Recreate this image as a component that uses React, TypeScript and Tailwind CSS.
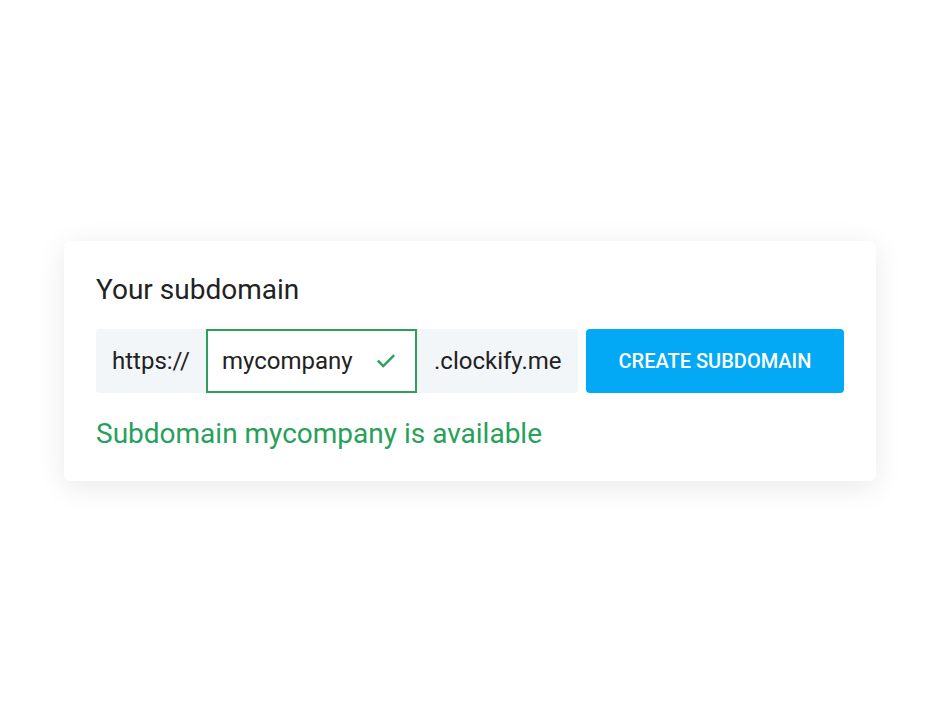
export default function App() {
  return (
    <div className="min-h-screen bg-white px-[64px] pt-[241px] font-['Roboto',sans-serif]">
      <div className="h-[240px] rounded-[6px] bg-white px-[32px] pt-[32px] shadow-[0_6px_30px_rgba(0,0,0,0.09)]">
        <h2 className="text-[28px] leading-[34px] font-normal text-[#222]">
          Your subdomain
        </h2>
        <div className="mt-[22px] flex h-[64px] gap-[8px]">
          <div className="flex w-[482px] rounded-[4px] bg-[#f2f6f9]">
            <div className="flex w-[110px] items-center pl-[16px] text-[24px] text-[#222]">
              https://
            </div>
            <div className="flex w-[211px] items-center justify-between border-2 border-[#2e9e5b] bg-white pr-[18px] pl-[14px] text-[24px] text-[#222]">
              <span>mycompany</span>
              <svg width="22" height="22" viewBox="0 0 24 24" fill="none">
                <path
                  d="M4 12.5l5 5L20 6.5"
                  stroke="#2e9e5b"
                  strokeWidth="2.6"
                  strokeLinecap="square"
                />
              </svg>
            </div>
            <div className="flex flex-1 items-center pl-[17px] text-[24px] text-[#222]">
              .clockify.me
            </div>
          </div>
          <button
            type="button"
            className="w-[258px] rounded-[4px] bg-[#03a9f4] text-[20px] font-medium text-white"
          >
            CREATE SUBDOMAIN
          </button>
        </div>
        <p className="mt-[24px] text-[28px] leading-[34px] text-[#27a05a]">
          Subdomain mycompany is available
        </p>
      </div>
    </div>
  );
}
